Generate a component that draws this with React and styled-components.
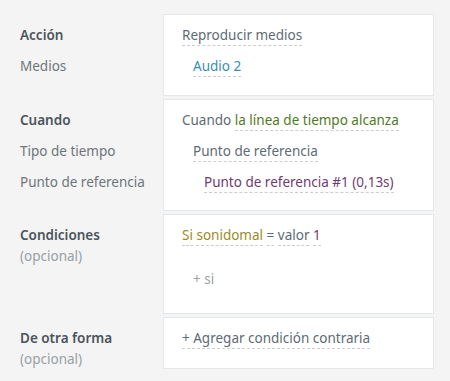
import React from 'react'
import styled, { createGlobalStyle } from 'styled-components'

const Global = createGlobalStyle`
  html, body {
    margin: 0;
    padding: 0;
    background: #f4f4f4;
  }
  body {
    font-family: 'Noto Sans', 'Open Sans', sans-serif;
    font-size: 13.5px;
    color: #5d6b76;
  }
`

const Page = styled.div`
  width: 450px;
  padding: 14px 16px 0 20px;
  box-sizing: border-box;
  display: flex;
  flex-direction: column;
  gap: 3px;
`

const Section = styled.div`
  display: grid;
  grid-template-columns: 143px 1fr;
`

const Labels = styled.div`
  padding-top: 11px;
  display: flex;
  flex-direction: column;
  gap: ${p => p.$tight ? '1px' : '11px'};
`

const Label = styled.div`
  line-height: 20px;
  color: ${p => p.$bold ? '#4b545b' : p.$muted ? '#9aa0a5' : '#6d757b'};
  font-weight: ${p => p.$bold ? 600 : 400};
  white-space: nowrap;
`

const Card = styled.div`
  background: #fff;
  border: 1px solid #e5e8eb;
  padding: 10px 18px ${p => p.$pb || 19}px 18px;
  display: flex;
  flex-direction: column;
  gap: 11px;
`

const Row = styled.div`
  line-height: 20px;
  padding-left: ${p => (p.$level || 0) * 11}px;
  white-space: nowrap;
`

const Token = styled.span`
  color: ${p => p.$color || '#5d6b76'};
  border-bottom: 1px dashed #c9ced3;
  padding-bottom: 1px;
`

const AddIf = styled.div`
  line-height: 20px;
  padding: 13px 0 0 11px;
  color: #9a9fa4;
`

const colors = {
  blue: '#3a8db3',
  green: '#4f7a26',
  purple: '#6f3c70',
  olive: '#9a8b27',
}

function App () {
  return (
    <Page>
      <Global />
      <Section>
        <Labels>
          <Label $bold>Acción</Label>
          <Label>Medios</Label>
        </Labels>
        <Card>
          <Row><Token>Reproducir medios</Token></Row>
          <Row $level={1}><Token $color={colors.blue}>Audio 2</Token></Row>
        </Card>
      </Section>

      <Section>
        <Labels>
          <Label $bold>Cuando</Label>
          <Label>Tipo de tiempo</Label>
          <Label>Punto de referencia</Label>
        </Labels>
        <Card $pb={18}>
          <Row>Cuando <Token $color={colors.green}>la línea de tiempo alcanza</Token></Row>
          <Row $level={1}><Token>Punto de referencia</Token></Row>
          <Row $level={2}><Token $color={colors.purple}>Punto de referencia #1 (0,13s)</Token></Row>
        </Card>
      </Section>

      <Section>
        <Labels $tight>
          <Label $bold>Condiciones</Label>
          <Label $muted>(opcional)</Label>
        </Labels>
        <Card $pb={24}>
          <Row>
            <Token $color={colors.olive}>Si</Token>{' '}
            <Token $color={colors.olive}>sonidomal</Token>{' '}
            <Token>=</Token>{' '}
            <Token>valor</Token>{' '}
            <Token $color={colors.purple}>1</Token>
          </Row>
          <AddIf>+ si</AddIf>
        </Card>
      </Section>

      <Section>
        <Labels $tight>
          <Label $bold>De otra forma</Label>
          <Label $muted>(opcional)</Label>
        </Labels>
        <Card $pb={18}>
          <Row><Token>+ Agregar condición contraria</Token></Row>
        </Card>
      </Section>
    </Page>
  )
}

export default App
